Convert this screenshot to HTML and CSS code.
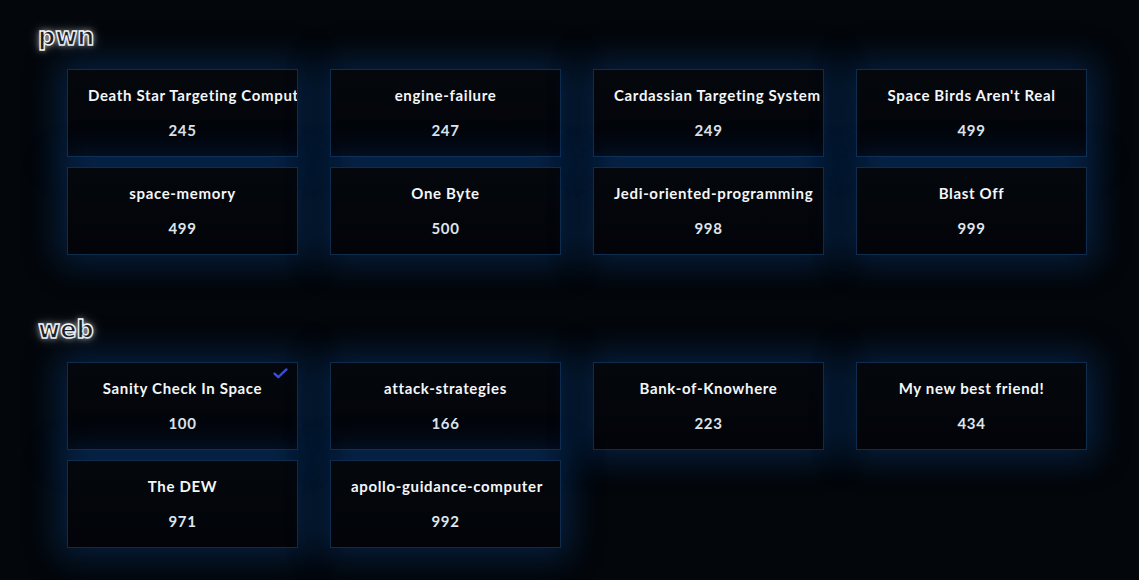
FILE: index.html
```html
<!DOCTYPE html>
<html lang="en">
<head>
    <meta charset="UTF-8">
    <meta name="viewport" content="width=device-width, initial-scale=1.0">
    <title>Challenges</title>
    <link rel="stylesheet" href="styles.css">
</head>
<body>
    <main class="board">
        <section class="category">
            <h2 class="category-title">pwn</h2>
            <div class="challenge-grid">
                <div class="challenge"><div class="challenge-name">Death Star Targeting Computer</div><div class="challenge-value">245</div></div>
                <div class="challenge"><div class="challenge-name">engine-failure</div><div class="challenge-value">247</div></div>
                <div class="challenge"><div class="challenge-name">Cardassian Targeting System</div><div class="challenge-value">249</div></div>
                <div class="challenge"><div class="challenge-name">Space Birds Aren't Real</div><div class="challenge-value">499</div></div>
                <div class="challenge"><div class="challenge-name">space-memory</div><div class="challenge-value">499</div></div>
                <div class="challenge"><div class="challenge-name">One Byte</div><div class="challenge-value">500</div></div>
                <div class="challenge"><div class="challenge-name">Jedi-oriented-programming</div><div class="challenge-value">998</div></div>
                <div class="challenge"><div class="challenge-name">Blast Off</div><div class="challenge-value">999</div></div>
            </div>
        </section>

        <section class="category">
            <h2 class="category-title">web</h2>
            <div class="challenge-grid">
                <div class="challenge solved">
                    <svg class="solved-mark" viewBox="0 0 16 12" width="15" height="11"><path d="M1.5 6.2 L5.6 10 L14.5 1.6" fill="none" stroke="#3a4fd8" stroke-width="2.6" stroke-linecap="round" stroke-linejoin="round"/></svg>
                    <div class="challenge-name">Sanity Check In Space</div><div class="challenge-value">100</div>
                </div>
                <div class="challenge"><div class="challenge-name">attack-strategies</div><div class="challenge-value">166</div></div>
                <div class="challenge"><div class="challenge-name">Bank-of-Knowhere</div><div class="challenge-value">223</div></div>
                <div class="challenge"><div class="challenge-name">My new best friend!</div><div class="challenge-value">434</div></div>
                <div class="challenge"><div class="challenge-name">The DEW</div><div class="challenge-value">971</div></div>
                <div class="challenge"><div class="challenge-name">apollo-guidance-computer</div><div class="challenge-value">992</div></div>
            </div>
        </section>
    </main>
</body>
</html>
```

FILE: styles.css
```css
body {
    margin: 0;
    background-color: #03060a;
    font-family: Lato, 'Open Sans', sans-serif;
    color: #fff;
}

.board {
    padding: 22px 0 0 38px;
}

.category {
    margin-bottom: 60px;
}

.category-title {
    margin: 0 0 17px 0;
    font-family: 'DejaVu Sans', sans-serif;
    font-size: 24px;
    font-weight: bold;
    letter-spacing: 0;
    line-height: 30px;
    color: #1c1f24;
    -webkit-text-stroke: 1.4px #f4f6f8;
    text-shadow: 0 0 6px rgba(255, 255, 255, 0.7), 0 0 14px rgba(255, 255, 255, 0.3);
}

.challenge-grid {
    display: grid;
    grid-template-columns: repeat(4, 231px);
    gap: 10px 32px;
    margin-left: 29px;
}

.challenge {
    position: relative;
    box-sizing: border-box;
    height: 88px;
    padding: 15px 20px 0 20px;
    display: flex;
    flex-direction: column;
    align-items: center;
    gap: 15px;
    overflow: hidden;
    background: linear-gradient(180deg, #04070c 0%, #020409 100%);
    border: 1px solid #0f2c4c;
    box-shadow: 0 0 32px 8px rgba(12, 72, 145, 0.42);
}

.challenge-name,
.challenge-value {
    width: 100%;
    font-size: 15px;
    font-weight: bold;
    line-height: 20px;
    letter-spacing: 0.65px;
    white-space: nowrap;
    text-align: center;
}

.challenge-name {
    color: #f4f6f8;
}

.challenge-value {
    color: #dfe5ec;
}

.solved-mark {
    position: absolute;
    top: 5px;
    right: 9px;
}
```
